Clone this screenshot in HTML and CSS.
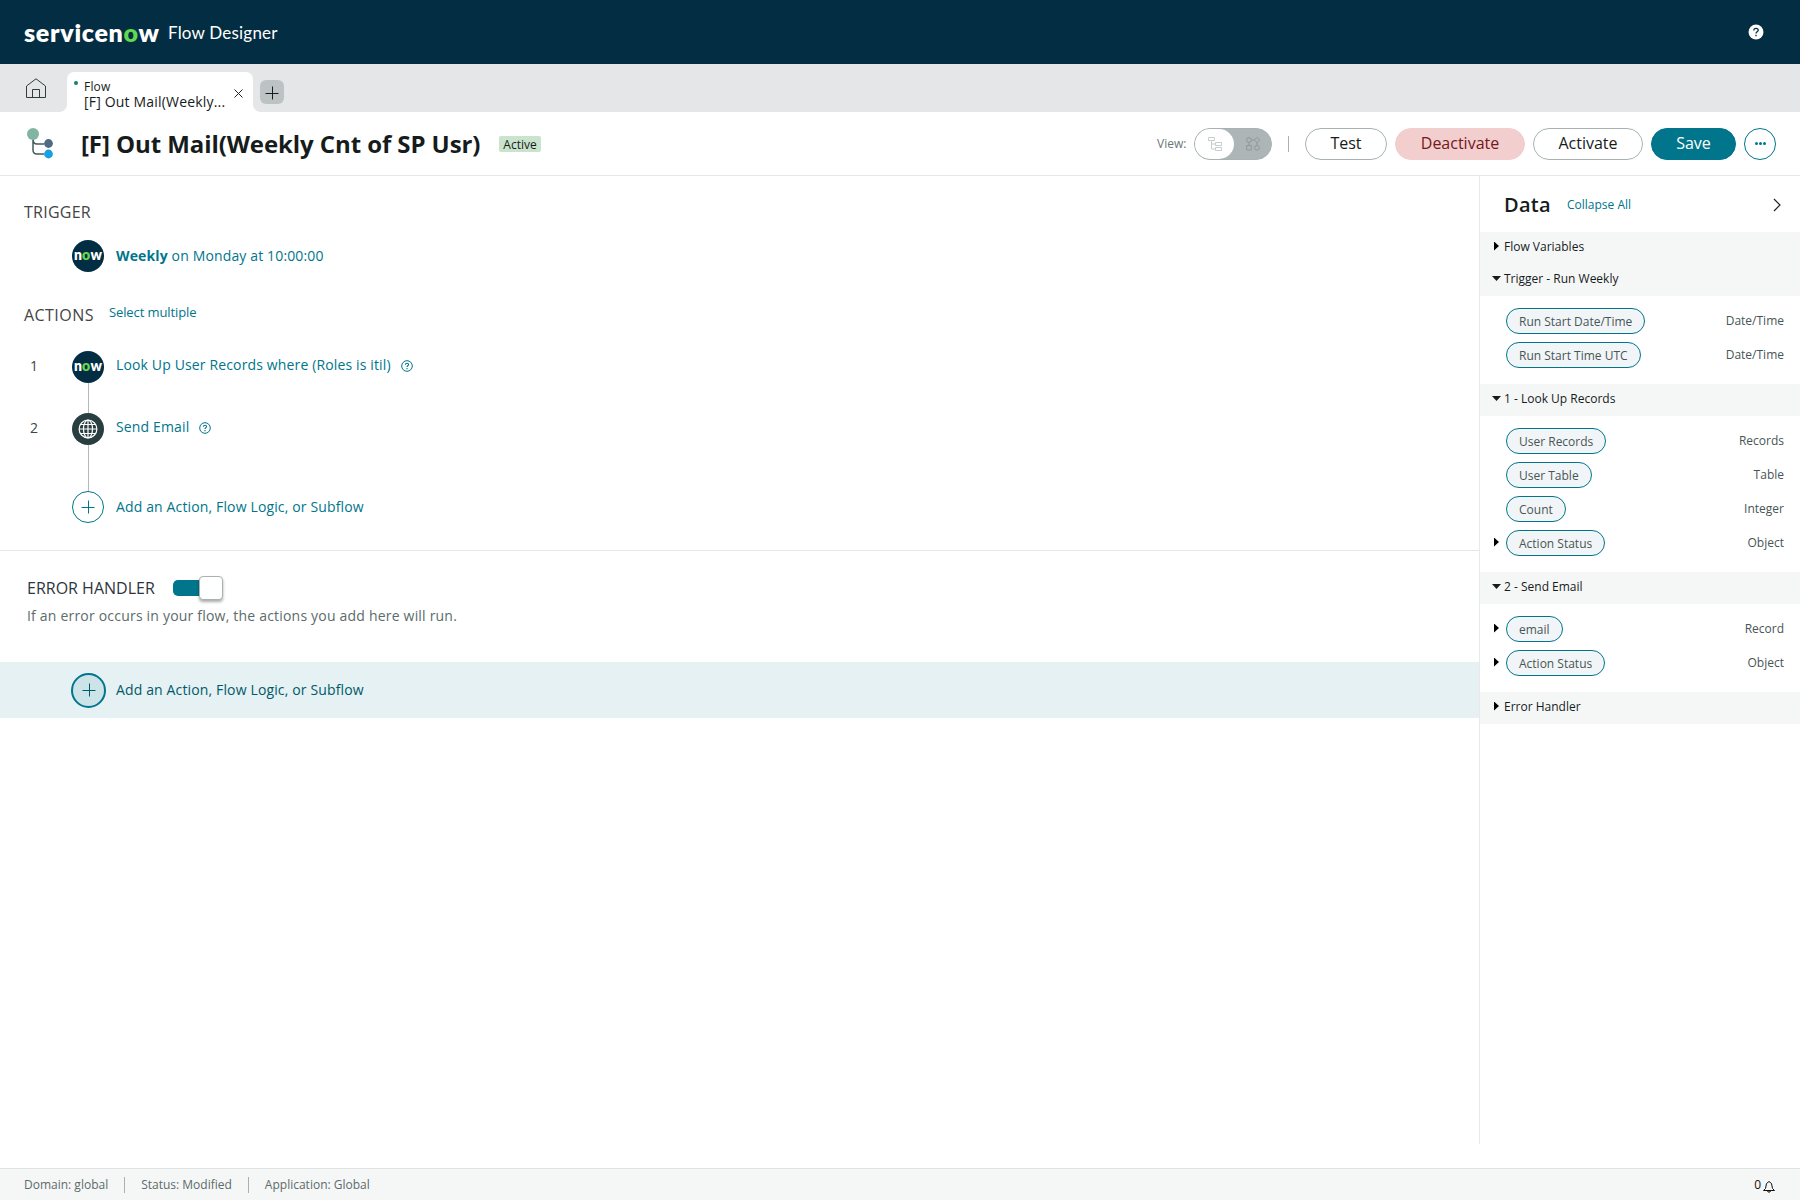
FILE: index.html
```html
<!DOCTYPE html>
<html lang="en">
<head>
<meta charset="utf-8">
<title>Flow Designer</title>
<link rel="stylesheet" href="styles.css">
</head>
<body>
<svg width="0" height="0" class="defs">
  <symbol id="plus" viewBox="0 0 14 14"><path d="M7.500 .5v13M.5 7.500h13" stroke="currentColor" fill="none"/></symbol>
  <symbol id="help" viewBox="0 0 12 12"><circle cx="6" cy="6" r="5.3" fill="none" stroke="currentColor"/><path d="M4.400 4.800c0-2.100 3.200-2 3.200-.2C7.600 5.700 6 5.700 6 7M6 8v1.200" fill="none" stroke="currentColor" stroke-width="1.100"/></symbol>
</svg>
<header class="banner">
  <span class="logo">servicen<span class="logo-o">o</span>w</span>
  <span class="product">Flow Designer</span>
  <svg class="banner-help" viewBox="0 0 16 16"><circle cx="8" cy="8" r="7.500" fill="#fff"/><path d="M5.800 6.500c0-3 4.400-2.700 4.400-.2C10.200 7.800 8 7.700 8 9.500M8 10.800v1.500" fill="none" stroke="#032d42" stroke-width="1.300"/></svg>
</header>
<nav class="tabs">
  <svg class="home" viewBox="0 0 20 20"><path d="M.5 19.500V8L10 .8 19.500 8v11.500zM6.500 19.500v-8h7v8" fill="none" stroke="#2e3d3d" stroke-width="1"/></svg>
  <div class="tab">
    <i class="dot"></i>
    <div class="tab-text"><div class="tab-type">Flow</div><div class="tab-name">[F] Out Mail(Weekly...</div></div>
    <svg class="close" viewBox="0 0 9 9"><path d="M.5.5l8 8M8.500.5l-8 8" stroke="#222" fill="none"/></svg>
  </div>
  <div class="new-tab"><svg viewBox="0 0 14 14"><use href="#plus"/></svg></div>
</nav>
<section class="titlebar">
  <svg class="flow-icon" viewBox="0 0 26 31"><path d="M6 10v12q0 4 4 4h7M6 11q0 5 4 5h7" fill="none" stroke="#455a5e" stroke-width="1.500"/><circle cx="6" cy="6" r="6" fill="#81b5a1"/><circle cx="21.500" cy="15.500" r="4.400" fill="#4f6b80"/><circle cx="21.500" cy="26" r="4.400" fill="#1a9fe3"/></svg>
  <h1>[F] Out Mail(Weekly Cnt of SP Usr)</h1>
  <span class="status">Active</span>
  <div class="tools">
    <span class="view-label">View:</span>
    <div class="view">
      <div class="view-on"><svg viewBox="0 0 14 14"><path d="M.5.5h6v3h-6zM7.500 5.500h6v3h-6zM7.500 10.500h6v3h-6zM3.500 3.500V12h4M3.500 7h4" fill="none" stroke="#c9cdcd"/></svg></div>
      <svg class="view-off" viewBox="0 0 14 14"><circle cx="3" cy="3" r="2.400"/><path d="M11 .3L13.700 3 11 5.700 8.300 3zM.7 8.500h4.600V13H.7zM3 5.400v3M5.400 3h3M11 5.700v2.500"/><circle cx="11" cy="10.800" r="2.400"/></svg>
    </div>
    <i class="tool-sep"></i>
    <button class="btn test">Test</button>
    <button class="btn deactivate">Deactivate</button>
    <button class="btn activate">Activate</button>
    <button class="btn save">Save</button>
    <button class="more"><i></i><i></i><i></i></button>
  </div>
</section>
<div class="body">
  <main>
    <h2 class="trigger-head"><span>TRIGGER</span></h2>
    <div class="step trigger"><span class="num"></span><span class="orb now">n<b>o</b>w</span><span class="label"><b>Weekly</b> on Monday at 10:00:00</span></div>
    <h2 class="actions-head"><span>ACTIONS</span><a>Select multiple</a></h2>
    <div class="steps">
      <div class="step s1"><span class="num">1</span><span class="orb now">n<b>o</b>w</span><span class="label">Look Up User Records where (Roles is itil)</span><svg class="help"><use href="#help"/></svg></div>
      <div class="line line1"></div>
      <div class="step s2"><span class="num">2</span><span class="orb globe"><svg viewBox="0 0 20 20"><g fill="none" stroke="#fff" stroke-width="1.200"><circle cx="10" cy="10" r="8.900"/><ellipse cx="10" cy="10" rx="4.500" ry="8.900"/><path d="M10 1v18M1 10h18M2.500 5.500h15M2.500 14.500h15"/></g></svg></span><span class="label">Send Email</span><svg class="help"><use href="#help"/></svg></div>
      <div class="line line2"></div>
      <div class="step add"><span class="num"></span><span class="orb plus"><svg viewBox="0 0 14 14"><use href="#plus"/></svg></span><span class="label">Add an Action, Flow Logic, or Subflow</span></div>
    </div>
    <div class="error-head"><span class="error-title">ERROR HANDLER</span><span class="switch"><i></i></span></div>
    <p>If an error occurs in your flow, the actions you add here will run.</p>
    <div class="step add hot"><span class="num"></span><span class="orb plus"><svg viewBox="0 0 14 14"><use href="#plus"/></svg></span><span class="label">Add an Action, Flow Logic, or Subflow</span></div>
  </main>
  <aside>
    <div class="data-head"><strong>Data</strong><a>Collapse All</a><svg viewBox="0 0 8 14"><path d="M1 1l6 6-6 6" fill="none" stroke="#222" stroke-width="1.200"/></svg></div>
    <div class="group"><i class="right"></i>Flow Variables</div>
    <div class="group"><i class="down"></i>Trigger - Run Weekly</div>
    <div class="pills">
      <div class="row"><i></i><span class="pill">Run Start Date/Time</span><em>Date/Time</em></div>
      <div class="row"><i></i><span class="pill">Run Start Time UTC</span><em>Date/Time</em></div>
    </div>
    <div class="group"><i class="down"></i>1 - Look Up Records</div>
    <div class="pills">
      <div class="row"><i></i><span class="pill">User Records</span><em>Records</em></div>
      <div class="row"><i></i><span class="pill">User Table</span><em>Table</em></div>
      <div class="row"><i></i><span class="pill">Count</span><em>Integer</em></div>
      <div class="row"><i class="right"></i><span class="pill">Action Status</span><em>Object</em></div>
    </div>
    <div class="group"><i class="down"></i>2 - Send Email</div>
    <div class="pills">
      <div class="row"><i class="right"></i><span class="pill">email</span><em>Record</em></div>
      <div class="row"><i class="right"></i><span class="pill">Action Status</span><em>Object</em></div>
    </div>
    <div class="group"><i class="right"></i>Error Handler</div>
  </aside>
</div>
<footer><span>Domain: global</span><span>Status: Modified</span><span>Application: Global</span>
  <div class="alerts">0<svg viewBox="0 0 12 13"><path d="M.5 10.500h11L9.500 8.500 8.500 3.500 6 1.500 3.500 3.500 2.500 8.500zM4.500 10.500l.5 1.500h2l.5-1.500" fill="none" stroke="#111"/></svg></div>
</footer>
</body>
</html>
```
FILE: styles.css
```css
* { box-sizing: border-box; }
body { margin: 0; width: 1800px; height: 1200px; display: flex; flex-direction: column; overflow: hidden; background: #fff; color: #161b1c; font: 13px/20px "Open Sans", sans-serif; white-space: nowrap; }
i, em { font-style: normal; }
.defs { position: absolute; }
.banner { height: 64px; flex: none; background: #032d42; color: #fff; display: flex; align-items: center; padding: 0 36px 0 24px; font-family: Lato, sans-serif; }
.logo { width: 136px; font: 800 25px/30px Lato, sans-serif; letter-spacing: .7px; }
.logo-o { color: #62d84e; }
.product { margin: 2px 0 0 8px; font-size: 17px; letter-spacing: .2px; }
.banner-help { width: 16px; height: 16px; margin-left: auto; }
.tabs { height: 48px; flex: none; background: #e4e6e7; display: flex; align-items: flex-start; }
.home { width: 20px; height: 20px; margin: 14px 21px 0 26px; }
.tab { width: 186px; height: 40px; margin-top: 8px; background: #fff; border-radius: 7px 7px 0 0; display: flex; position: relative; }
.tab::before, .tab::after { content: ""; position: absolute; bottom: 0; width: 7px; height: 7px; }
.tab::before { left: -7px; background: radial-gradient(circle at 0 0, transparent 6.500px, #fff 7px); }
.tab::after { right: -7px; background: radial-gradient(circle at 100% 0, transparent 6.500px, #fff 7px); }
.dot { width: 4px; height: 4px; margin: 9px 6px 0 7px; border-radius: 50%; background: #17806c; }
.tab-text { padding-top: 7px; width: 147px; }
.tab-type { font-size: 12px; line-height: 15px; letter-spacing: .2px; }
.tab-name { font-size: 14px; line-height: 15px; letter-spacing: .18px; }
.close { width: 9px; height: 9px; margin: 17px 0 0 3px; }
.new-tab { width: 24px; height: 24px; margin: 16px 0 0 7px; border-radius: 6px; background: #bdc3c5; display: grid; place-items: center; }
.new-tab svg { width: 14px; height: 14px; margin-top: 2px; }
.titlebar { height: 64px; flex: none; border-bottom: 1px solid #e4e6e7; display: flex; align-items: center; padding: 0 24px 0 27px; }
.flow-icon { width: 26px; height: 31px; margin-right: 28px; }
h1 { margin: 0; width: 400px; font-size: 24px; line-height: 32px; font-weight: 700; letter-spacing: -.08px; }
.status { margin-left: 18px; width: 42px; height: 16px; border-radius: 2px; background: #cae3cd; font-size: 12px; line-height: 17px; text-align: center; }
.tools { margin-left: auto; display: flex; align-items: center; }
.view-label { font-size: 12px; color: #6a7676; width: 37px; }
.view { width: 78px; height: 32px; border-radius: 16px; border: 1px solid #a9b2b3; background: #adb5b6; display: flex; align-items: center; }
.view-on { width: 39px; height: 30px; background: #fff; border-radius: 15px; display: grid; place-items: center; }
.view svg { width: 14px; height: 14px; }
.view-off { margin-left: 12px; fill: none; stroke: #8f999a; }
.tool-sep { width: 1px; height: 16px; background: #a9b2b3; margin: 0 16px; }
.btn { height: 32px; padding: 0; border-radius: 16px; border: 1px solid #a9b2b3; background: #fff; color: #161b1c; font: 16px/28px "Open Sans", sans-serif; padding-bottom: 2px; margin-right: 8px; }
.test { width: 82px; }
.deactivate { width: 130px; background: #f2cece; border-color: #f2cece; color: #73181b; }
.activate { width: 110px; }
.save { width: 85px; background: #00758c; border-color: #00758c; color: #fff; }
.more { width: 32px; height: 32px; padding: 0; border: 1px solid #00758c; border-radius: 50%; background: #fff; display: flex; align-items: center; justify-content: center; gap: 1px; }
.more i { width: 3px; height: 3px; border-radius: 50%; background: #00758c; }
.body { height: 992px; flex: none; display: flex; }
main { flex: 1; padding-top: 25px; }
h2 { margin: 0; padding-left: 24px; font-size: 16px; line-height: 22px; font-weight: 400; color: #444; display: flex; }
.trigger-head { letter-spacing: .25px; }
.step { display: flex; align-items: center; height: 32px; font-size: 14px; letter-spacing: .14px; color: #00758c; }
.num { width: 42px; margin-left: 30px; margin-top: -2px; color: #3c4848; }
.orb { width: 32px; height: 32px; flex: none; border-radius: 50%; display: grid; place-items: center; }
.label { margin: -1px 0 0 12px; }
.now { background: #032d42; color: #fff; display: flex; justify-content: center; align-items: center; font: 800 14px/28px Lato, sans-serif; letter-spacing: .2px; padding-bottom: 2px; }
.now b { color: #62d84e; font-weight: 800; }
.trigger { margin-top: 17px; }
.actions-head { margin-top: 32px; letter-spacing: .45px; }
h2 a { margin: -3px 0 0 15px; font-size: 13px; letter-spacing: -.1px; color: #00758c; }
.steps { margin-top: 25px; height: 200px; border-bottom: 1px solid #e4e6e7; }
.line { width: 1px; background: #b5b7bb; margin-left: 88px; }
.line1 { height: 30px; }
.line2 { height: 46px; }
.s1 .label, .s2 .label { margin-top: -5px; }
.help { width: 12px; height: 12px; margin: -3px 0 0 10px; }
.globe { background: #293e40; }
.globe svg { width: 20px; height: 20px; }
.plus { border: 1px solid #00758c; }
.plus svg { width: 14px; height: 14px; }
.error-head { height: 48px; padding: 25px 0 0 27px; display: flex; align-items: center; font-size: 16px; color: #2e3540; }
.error-title { width: 146px; }
.switch { width: 50px; height: 16px; border-radius: 5px; background: #00758c; display: flex; justify-content: flex-end; align-items: center; }
.switch i { width: 24px; height: 24px; border: 1px solid #a9b2b3; border-radius: 4px; background: #fff; box-shadow: 0 2px 3px #0005; }
p { margin: 6px 0 35px 27px; font-size: 14px; letter-spacing: .2px; line-height: 22px; color: #5c6b6b; }
.hot { height: 56px; background: #e5f1f3; color: #00596b; }
.hot .orb { width: 35px; height: 35px; margin-left: -1px; border: 2px solid #00758c; background: #cce3e8; }
.hot .label { margin-left: 10px; }
aside { width: 321px; height: 968px; border-left: 1px solid #e8eaea; }
.data-head { height: 56px; display: flex; align-items: center; padding: 1px 19px 0 24px; }
.data-head strong { width: 63px; font-size: 20px; font-weight: 600; letter-spacing: .3px; }
.data-head a { font-size: 12px; color: #00758c; }
.data-head svg { width: 8px; height: 14px; margin-left: auto; }
.group { height: 32px; background: #f5f7f7; display: flex; align-items: center; padding: 0 0 2px 12px; font-size: 12px; }
.group i { width: 12px; }
.right::before, .down::before { content: ""; display: block; }
.right::before { width: 5px; height: 9px; margin: -2px 0 0 2px; background: #000; clip-path: polygon(0 0, 100% 50%, 0 100%); }
.down::before { width: 9px; height: 5px; margin-top: -1px; background: #161b1c; clip-path: polygon(0 0, 100% 0, 50% 100%); }
.pills { padding: 12px 16px 16px 12px; display: flex; flex-direction: column; gap: 8px; }
.row { display: flex; align-items: center; height: 26px; color: #485555; font-size: 12px; }
.row i { width: 14px; }
.pill { height: 26px; padding: 0 12px; border: 1px solid #00758c; border-radius: 13px; background: #f1f5f7; line-height: 26px; }
.row em { margin: -1px 0 0 auto; }
footer { height: 32px; flex: none; border-top: 1px solid #dfe2e2; background: #f5f7f7; display: flex; align-items: center; padding: 0 25px 0 24px; color: #5c6b6b; font-size: 12px; }
footer span + span { margin-left: 16px; padding-left: 16px; border-left: 1px solid #a9b2b3; line-height: 16px; }
.alerts { margin-left: auto; display: flex; align-items: center; gap: 2px; color: #111; }
.alerts svg { width: 12px; height: 13px; margin-top: 4px; }
```
